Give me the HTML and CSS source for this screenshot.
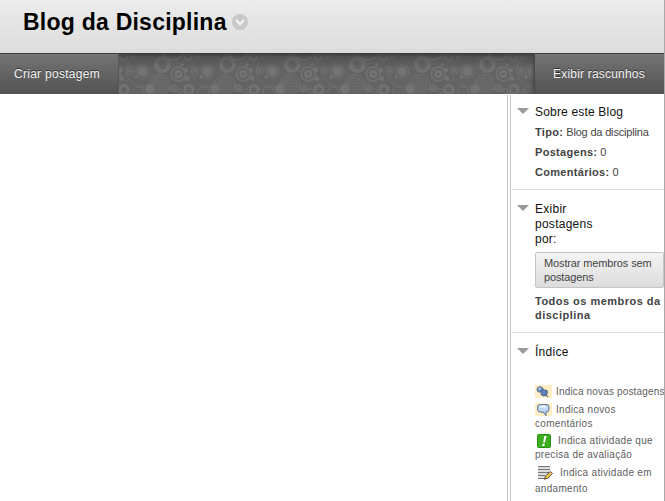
FILE: index.html
```html
<!DOCTYPE html>
<html lang="pt-BR">
<head>
<meta charset="utf-8">
<title>Blog da Disciplina</title>
<link rel="stylesheet" href="styles.css">
</head>
<body>
<div class="page">
  <header class="header">
    <h1 class="title">Blog da Disciplina</h1>
    <svg class="title-menu" width="16" height="16" viewBox="0 0 16 16"><circle cx="8" cy="8" r="8" fill="#c9c9c9"/><path d="M4 6l4 4 4-4" fill="none" stroke="#f4f4f4" stroke-width="2.4"/></svg>
  </header>
  <nav class="bar">
    <a class="action create">Criar postagem</a>
    <div class="ornament">
      <svg width="100%" height="41">
        <defs>
          <pattern id="rings" width="65" height="41" patternUnits="userSpaceOnUse">
            <g fill="none" stroke="#72716f" stroke-width="1">
              <circle cx="24" cy="17" r="16.5" stroke-opacity=".5"/>
              <circle cx="11" cy="18" r="3.5"/>
              <circle cx="23.3" cy="18.7" r="6.7"/>
              <circle cx="43.3" cy="11.7" r="6.5" stroke-width="3.5"/>
              <circle cx="54" cy="-4" r="15" stroke-opacity=".6"/>
              <circle cx="54" cy="-4" r="11" stroke-width="2.5"/>
              <circle cx="59.3" cy="21" r="7" stroke-width="1.6"/>
              <circle cx="-5.7" cy="21" r="7" stroke-width="1.6"/>
              <circle cx="40.7" cy="31.7" r="10"/>
              <circle cx="40.7" cy="31.7" r="7.3"/>
              <circle cx="40.7" cy="31.7" r="4.7"/>
              <circle cx="40.7" cy="31.7" r="2.2"/>
              <circle cx="54.3" cy="35.3" r="3" stroke-width="1.6"/>
              <circle cx="61.3" cy="38" r="2.6"/>
              <circle cx="19.3" cy="39.3" r="5.5"/>
              <circle cx="4.4" cy="4" r="3.5" stroke-width="2"/>
              <circle cx="14" cy="3" r="2"/>
              <circle cx="4.7" cy="36.7" r="4.2" stroke-width="3.2"/>
            </g>
            <g fill="#747371">
              <circle cx="23.3" cy="18.7" r="4.8"/>
              <circle cx="59.3" cy="21" r="4"/>
              <circle cx="31" cy="36" r="4.8"/>
              <circle cx="2" cy="17" r="2"/>
              <circle cx="3" cy="25.5" r="2.3"/>
              <circle cx="17" cy="24" r="1.6"/>
              <circle cx="63" cy="11.5" r="1.5"/>
              <circle cx="11" cy="18" r="1.6"/>
              <circle cx="54.3" cy="35.3" r="1.2"/>
            </g>
            <circle cx="59.3" cy="21" r="1.3" fill="#62615e"/>
          </pattern>
        </defs>
        <rect width="100%" height="41" fill="url(#rings)"/>
      </svg>
    </div>
    <a class="action drafts">Exibir rascunhos</a>
  </nav>
  <div class="content">
    <main class="posts"></main>
    <aside class="side">
      <section class="module about">
        <i class="arrow"></i>
        <div class="body">
          <h2>Sobre este Blog</h2>
          <p class="fact"><b>Tipo:</b> <span class="kind">Blog da disciplina</span></p>
          <p class="fact"><b>Postagens:</b> 0</p>
          <p class="fact"><b>Comentários:</b> 0</p>
        </div>
      </section>
      <section class="module view">
        <i class="arrow"></i>
        <div class="body">
          <h2>Exibir<br>postagens<br>por:</h2>
          <button class="members">Mostrar membros sem<br>postagens</button>
          <p class="all">Todos os membros da<br>disciplina</p>
        </div>
      </section>
      <section class="module index">
        <i class="arrow"></i>
        <div class="body">
          <h2>Índice</h2>
          <ul class="legend">
            <li class="one"><svg width="17" height="13" viewBox="0 0 17 13"><path fill="#ffedc4" d="M0 0h17v13H0z"/><path d="M10 9l3 3" stroke="#777" stroke-width="1.2"/><ellipse cx="5" cy="4.500" rx="3" ry="2.800" fill="#6f91c4" stroke="#49648f" stroke-width=".8"/><path d="M6 6l2.500-2 1 1.500 2-.5 1 2-1 3-3 1-2.500-1.500.500-2z" fill="#5f83ba" stroke="#385482" stroke-width=".9"/><circle cx="4.500" cy="3.700" r="1.200" fill="#b7cdec"/></svg><span class="new">Indica novas postagens</span></li>
            <li><svg width="17" height="13" viewBox="0 0 17 13"><path fill="#ffedc4" d="M0 0h17v13H0z"/><path d="M6 1.500h5q3 0 3 3.800t-3 3.800v3.200l-3-3.200H6q-3.500 0-3.500-3.800t3.500-3.800z" fill="#bfd4ef" stroke="#687fa4" stroke-width="1.100"/><path d="M5 4.300q3-1.500 6 0" fill="none" stroke="#edf5ff" stroke-width="2"/></svg><span>Indica novos</span><br>comentários</li>
            <li class="review"><svg width="17" height="14" viewBox="0 0 17 14"><rect x="2.500" y=".5" width="13" height="13" rx="1" fill="#3fad21" stroke="#279010"/><path d="M9.200 2h2.400l-1.700 6.500H8.200zM7.600 9.700h2.200l-.5 2.200H7.100z" fill="#fff"/></svg><span>Indica atividade que</span><br>precisa de avaliação</li>
            <li class="progress"><svg width="19" height="14" viewBox="0 0 19 14"><path fill="#ddd" d="M3 0h12v13H3z"/><path d="M3 .5h12M3 3.500h12M3 6.500h11M3 9.500h7M3 12.500h6" stroke="#777"/><path d="M9.500 13.300l1-3.300 5-4.500 2 2-5 4.700z" fill="#f2c94c" stroke="#4d3a1c" stroke-width=".9"/><path d="M15 6.500l1.500 1.500" stroke="#eeb4a0" stroke-width="1.500"/></svg><span>Indica atividade em</span><br><span class="last">andamento</span></li>
          </ul>
        </div>
      </section>
    </aside>
  </div>
</div>
</body>
</html>
```
FILE: styles.css
```css
* { box-sizing: border-box; }
body { margin: 0; overflow: hidden; background: #fff; font-family: "Liberation Sans", Arial, sans-serif; color: #444; }
h1, h2, p, ul { margin: 0; padding: 0; }
.page { width: 665px; height: 501px; display: flex; flex-direction: column; border-right: 1px solid #aaa; overflow: hidden; }
.header { height: 53px; flex: none; display: flex; align-items: flex-start; padding: 8px 0 0 23px; background: linear-gradient(#ececec, #dcdcdc); }
.title { width: 203px; font-size: 23px; line-height: 28px; letter-spacing: .24px; color: #000; white-space: nowrap; }
.title-menu { margin: 6px 0 0 6px; }
.bar { height: 41px; flex: none; display: flex; background: #666; }
.action { flex: none; height: 41px; line-height: 40px; font-size: 12px; color: #f4f4f4; background: linear-gradient(#747474, #525252); border-top: 1px solid #3e3e3e; text-shadow: 0 -1px 0 #333; white-space: nowrap; }
.create { width: 119px; padding-left: 14px; letter-spacing: .28px; border-right: 1px solid #585858; }
.drafts { width: 130px; padding-left: 18px; letter-spacing: .2px; border-left: 1px solid #484848; }
.ornament { position: relative; flex: 1; height: 41px; overflow: hidden; background: #636363; }
.ornament svg { display: block; }
.ornament::after { content: ""; position: absolute; inset: 0; background: linear-gradient(rgba(45,45,45,.8), rgba(50,50,50,.35) 4px, rgba(60,60,60,0) 14px); box-shadow: inset -4px 0 5px -3px #444; }
.content { flex: 1; display: flex; margin-top: 1px; }
.posts { width: 507px; }
.side { flex: none; width: 157px; border-left: 1px solid #c4c4c4; padding-left: 2px; overflow: hidden; }
.module { display: flex; border-left: 1px solid #c4c4c4; border-bottom: 1px solid #ddd; padding-left: 6px; }
.about { height: 95px; padding-top: 9px; }
.view { height: 143px; padding-top: 12px; }
.index { height: 180px; padding-top: 12px; border-bottom: 0; }
.arrow { flex: none; width: 12px; height: 6px; margin: 3px 6px 0 0; background: #999; clip-path: polygon(0 0, 100% 0, 50% 100%); }
.about .arrow { margin-top: 4px; }
.body { flex: none; width: 129px; white-space: nowrap; }
h2 { font-weight: normal; font-size: 12px; line-height: 15px; letter-spacing: .26px; color: #111; }
.fact { font-size: 11px; line-height: 20px; }
.about h2 { padding-top: 1px; margin-bottom: 2px; letter-spacing: .18px; }
.fact b { letter-spacing: .3px; }
.fact .kind { letter-spacing: -.18px; }
.members { display: block; width: 129px; height: 36px; margin: 5px 0 0; padding: 0 0 0 8px; border: 1px solid #c4c4c4; border-radius: 2px; background: linear-gradient(#f4f4f4, #dcdcdc); font: 11px/14px "Liberation Sans", Arial, sans-serif; letter-spacing: -.13px; color: #444; text-align: left; white-space: nowrap; }
.all { margin-top: 6px; font-size: 11px; line-height: 14px; font-weight: bold; letter-spacing: .48px; }
.legend { list-style: none; margin-top: 25px; font-size: 10px; line-height: 14px; color: #606060; letter-spacing: .3px; }
.legend li { height: 31px; }
.legend .one { height: 18px; }
.legend .new { letter-spacing: .16px; }
.legend svg { vertical-align: -3px; margin-right: 4px; }
.legend .review { height: 32px; }
.legend .review svg { vertical-align: -4px; margin-right: 6px; }
.legend .progress svg { vertical-align: -4px; margin-right: 6px; }
.legend .last { display: inline-block; margin-top: 2px; }
```
